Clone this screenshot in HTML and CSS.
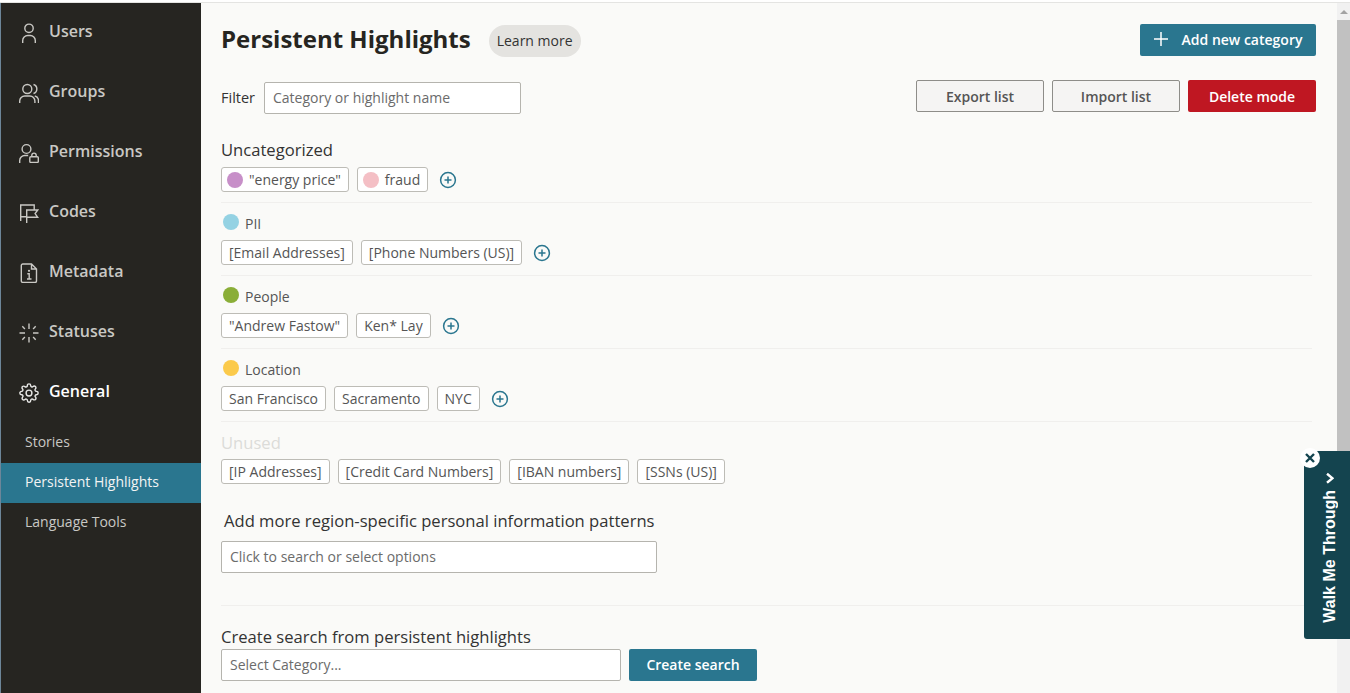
FILE: index.html
```html
<!DOCTYPE html>
<html lang="en">
<head>
<meta charset="utf-8">
<title>Persistent Highlights</title>
<link rel="stylesheet" href="styles.css">
</head>
<body>
<div class="app">
  <nav class="sidebar">
    <a class="nav-item"><svg class="nav-icon" viewBox="0 0 20 20"><circle cx="10" cy="5.300" r="4.200"/><path d="M3.700 20v-2.500a5 5 0 0 1 5-5h2.600a5 5 0 0 1 5 5V20"/></svg><span>Users</span></a>
    <a class="nav-item"><svg class="nav-icon" viewBox="0 0 20 20"><circle cx="8.300" cy="6" r="4.500"/><path d="M14.500 1.500a4.700 4.700 0 0 1 0 9M.7 20v-2a5 5 0 0 1 5-5h5.200a5 5 0 0 1 5 5v2M15.800 13a5 5 0 0 1 3.700 5v2"/></svg><span>Groups</span></a>
    <a class="nav-item"><svg class="nav-icon" viewBox="0 0 20 20"><circle cx="7.500" cy="6" r="4.400"/><path d="M.7 20v-2.500a5 5 0 0 1 5-5h3.500"/><rect x="10.800" y="13.800" width="8.500" height="5.600" rx="1"/><path d="M12.800 13.800v-1.500a2.200 2.200 0 0 1 4.400 0v1.500"/></svg><span>Permissions</span></a>
    <a class="nav-item"><svg class="nav-icon" viewBox="0 0 20 20"><path d="M1.700 18V2h13.500v5M1.700 13.700h6M7.700 20V7h11l-2.600 3.600 2.600 3.700h-11"/></svg><span>Codes</span></a>
    <a class="nav-item"><svg class="nav-icon" viewBox="0 0 20 20"><path d="M3.800 1h8.700l5 5v12a1.500 1.500 0 0 1-1.500 1.500H3.800A1.500 1.500 0 0 1 2.300 18V2.500A1.500 1.500 0 0 1 3.800 1zM12.500 1v5h5M8.300 10.700h1.900v5.300M8 16h4.500"/><circle class="icon-dot" cx="10" cy="7.800" r="1.100"/></svg><span>Metadata</span></a>
    <a class="nav-item"><svg class="nav-icon" viewBox="0 0 20 20"><path d="M10 .5v5.500M10 14v5.500M.5 10H6M14 10h5.500M3.300 3.300l2.600 2.600M14.100 14.100l2.600 2.600M3.300 16.700l2.600-2.600M14.100 5.900l2.600-2.600"/></svg><span>Statuses</span></a>
    <a class="nav-item active"><svg class="nav-icon nav-icon-gear" viewBox="0 0 24 24"><circle cx="12" cy="12" r="3.500"/><path d="M19.400 15a1.650 1.650 0 0 0 .33 1.820l.06.06a2 2 0 0 1 0 2.830 2 2 0 0 1-2.830 0l-.06-.06a1.650 1.650 0 0 0-1.820-.33 1.650 1.650 0 0 0-1 1.510V21a2 2 0 0 1-2 2 2 2 0 0 1-2-2v-.09A1.650 1.650 0 0 0 9 19.400a1.650 1.650 0 0 0-1.820.33l-.06.06a2 2 0 0 1-2.830 0 2 2 0 0 1 0-2.830l.06-.06a1.650 1.650 0 0 0 .33-1.820 1.650 1.650 0 0 0-1.510-1H3a2 2 0 0 1-2-2 2 2 0 0 1 2-2h.09A1.650 1.650 0 0 0 4.600 9a1.650 1.650 0 0 0-.33-1.820l-.06-.06a2 2 0 0 1 0-2.830 2 2 0 0 1 2.830 0l.06.06a1.650 1.650 0 0 0 1.820.33H9a1.650 1.650 0 0 0 1-1.510V3a2 2 0 0 1 2-2 2 2 0 0 1 2 2v.09a1.650 1.650 0 0 0 1 1.510 1.650 1.650 0 0 0 1.820-.33l.06-.06a2 2 0 0 1 2.830 0 2 2 0 0 1 0 2.830l-.06.06a1.650 1.650 0 0 0-.33 1.820V9a1.650 1.650 0 0 0 1.510 1H21a2 2 0 0 1 2 2 2 2 0 0 1-2 2h-.09a1.650 1.650 0 0 0-1.510 1z"/></svg><span>General</span></a>
    <a class="sub-item">Stories</a>
    <a class="sub-item current">Persistent Highlights</a>
    <a class="sub-item">Language Tools</a>
  </nav>

  <main class="content">
    <header class="title-row">
      <h1>Persistent Highlights</h1>
      <a class="learn">Learn more</a>
      <button class="btn btn-primary btn-add"><svg class="plus" viewBox="0 0 14 14"><path d="M7 0v14M0 7h14"/></svg>Add new category</button>
    </header>

    <div class="filter-row">
      <label class="filter-label">Filter</label>
      <div class="field field-filter">Category or highlight name</div>
      <div class="actions">
        <button class="btn btn-outline">Export list</button>
        <button class="btn btn-outline">Import list</button>
        <button class="btn btn-danger">Delete mode</button>
      </div>
    </div>

    <section class="group group-first">
      <h2 class="heading">Uncategorized</h2>
      <div class="tags">
        <span class="tag"><i class="dot dot-purple"></i>"energy price"</span>
        <span class="tag"><i class="dot dot-pink"></i>fraud</span>
        <svg class="add" viewBox="0 0 18 18"><circle cx="9" cy="9" r="7.400"/><path d="M9 5.500v7M5.500 9h7"/></svg>
      </div>
    </section>

    <section class="group">
      <div class="cat"><i class="dot dot-blue"></i>PII</div>
      <div class="tags">
        <span class="tag">[Email Addresses]</span>
        <span class="tag">[Phone Numbers (US)]</span>
        <svg class="add" viewBox="0 0 18 18"><circle cx="9" cy="9" r="7.400"/><path d="M9 5.500v7M5.500 9h7"/></svg>
      </div>
    </section>

    <section class="group">
      <div class="cat"><i class="dot dot-green"></i>People</div>
      <div class="tags">
        <span class="tag">"Andrew Fastow"</span>
        <span class="tag">Ken* Lay</span>
        <svg class="add" viewBox="0 0 18 18"><circle cx="9" cy="9" r="7.400"/><path d="M9 5.500v7M5.500 9h7"/></svg>
      </div>
    </section>

    <section class="group">
      <div class="cat"><i class="dot dot-yellow"></i>Location</div>
      <div class="tags">
        <span class="tag">San Francisco</span>
        <span class="tag">Sacramento</span>
        <span class="tag">NYC</span>
        <svg class="add" viewBox="0 0 18 18"><circle cx="9" cy="9" r="7.400"/><path d="M9 5.500v7M5.500 9h7"/></svg>
      </div>
    </section>

    <section class="group group-unused">
      <h2 class="heading heading-muted">Unused</h2>
      <div class="tags">
        <span class="tag">[IP Addresses]</span>
        <span class="tag">[Credit Card Numbers]</span>
        <span class="tag">[IBAN numbers]</span>
        <span class="tag">[SSNs (US)]</span>
      </div>
    </section>

    <section class="region">
      <h2 class="heading heading-region">Add more region-specific personal information patterns</h2>
      <div class="field field-region">Click to search or select options</div>
    </section>

    <section class="create">
      <h2 class="heading heading-create">Create search from persistent highlights</h2>
      <div class="create-row">
        <div class="field field-category">Select Category...</div>
        <button class="btn btn-primary btn-create">Create search</button>
      </div>
    </section>
  </main>

  <div class="scrollbar"><span class="scroll-arrow"></span><span class="scroll-thumb"></span></div>
</div>

<aside class="walkme">
  <span class="walkme-label">Walk Me Through<svg class="walkme-chev" viewBox="0 0 8 11"><path d="M7 1 1.500 5.500 7 10"/></svg></span>
  <span class="walkme-close"><svg viewBox="0 0 10 10"><path d="M1 1l8 8M9 1l-8 8"/></svg></span>
</aside>
</body>
</html>
```

FILE: styles.css
```css
* { box-sizing: border-box; }
html, body { margin: 0; height: 100%; overflow: hidden; }
body {
  font-family: "Open Sans", "Liberation Sans", sans-serif;
  color: #333;
  background: #fafaf8;
  position: relative;
}
.app {
  display: flex;
  height: 693px;
  padding-top: 3px;
  background: linear-gradient(#fff 0 2px, #e4e4e2 2px 3px, transparent 3px);
}
.sidebar {
  width: 201px;
  flex: none;
  background: #262521;
  border-left: 1px solid #6d8699;
}
.nav-item {
  height: 60px;
  display: flex;
  align-items: center;
  padding-left: 18px;
  padding-bottom: 4px;
  gap: 10px;
  color: #c9c8c4;
  font-size: 16px;
  font-weight: 600;
}
.nav-item.active { color: #fff; }
.nav-icon {
  width: 20px;
  height: 20px;
  fill: none;
  stroke: #c9c8c4;
  stroke-width: 1.400;
  flex: none;
  margin-top: 4px;
}
.nav-item.active .nav-icon { stroke: #e8e8e6; }
.nav-icon-gear { stroke-width: 1.700; }
.icon-dot { fill: #c9c8c4; stroke: none; }
.sub-item {
  display: flex;
  align-items: center;
  height: 40px;
  padding: 0 0 4px 24px;
  font-size: 14px;
  color: #c9c8c4;
}
.sub-item.current { background: #2a768f; color: #f2f4f4; }
.content {
  flex: 1;
  min-width: 0;
  padding: 21px 21px 0 20px;
  background: #fafaf8;
}
.title-row {
  display: flex;
  align-items: center;
  height: 32px;
}
h1 {
  margin: 0 0 4px;
  font-size: 24px;
  font-weight: 700;
  color: #262521;
}
.learn {
  margin: 2px 0 0 18px;
  height: 32px;
  line-height: 32px;
  padding: 0 8px;
  border-radius: 16px;
  background: #e4e3e0;
  font-size: 14px;
  color: #333;
}
.btn {
  font-family: inherit;
  font-size: 14px;
  font-weight: 600;
  height: 32px;
  border-radius: 2px;
  border: 0;
  padding: 0;
  display: inline-flex;
  align-items: center;
  justify-content: center;
}
.btn-primary { background: #2a768f; color: #fff; }
.btn-add { margin-left: auto; width: 176px; gap: 14px; padding-bottom: 2px; }
.plus { width: 14px; height: 14px; fill: none; stroke: #fff; stroke-width: 1.500; }
.filter-row {
  display: flex;
  align-items: center;
  margin-top: 24px;
  height: 32px;
}
.filter-label { width: 43px; flex: none; font-size: 14.500px; font-weight: 500; color: #333; margin-top: 2px; }
.field {
  background: #fff;
  border: 1px solid #b5b4ae;
  border-radius: 2px;
  height: 32px;
  display: flex;
  align-items: center;
  font-size: 14px;
  color: #6b6b6b;
  padding-bottom: 2px;
}
.field-filter { width: 257px; padding-left: 8px; margin-top: 4px; }
.actions { margin-left: auto; display: flex; gap: 8px; }
.btn-outline {
  width: 128px;
  background: #f5f4f3;
  border: 1px solid #8e8d89;
  color: #555;
}
.btn-danger { width: 128px; background: #bf1722; color: #fff; }
.group {
  height: 73px;
  margin-right: 4px;
  border-bottom: 1px solid #f0efed;
  padding-top: 12px;
}
.group-first { padding-top: 0; margin-top: 26px; height: 65px; }
.group-unused { border-bottom: 0; padding-top: 9px; height: 87px; }
.heading {
  margin: 0;
  font-size: 16.600px;
  font-weight: 500;
  line-height: 24px;
  color: #333;
}
.heading-muted { color: #dcdcd9; }
.heading-region { padding-left: 3px; }
.cat {
  display: flex;
  align-items: center;
  height: 16px;
  font-size: 14px;
  color: #555;
}
.cat .dot { margin: -3px 6px 0 2px; }
.dot {
  display: inline-block;
  width: 16px;
  height: 16px;
  border-radius: 50%;
  flex: none;
}
.dot-purple { background: #c78fc8; }
.dot-pink { background: #f4bfc5; }
.dot-blue { background: #94d2e3; }
.dot-green { background: #8aae38; }
.dot-yellow { background: #fbca4b; }
.tags {
  display: flex;
  align-items: center;
  gap: 8px;
  margin-top: 9px;
}
.group-first .tags { margin-top: 5px; }
.group-unused .tags { margin-top: 4px; }
.tag {
  height: 25px;
  display: inline-flex;
  align-items: center;
  gap: 6px;
  padding: 0 7px;
  border: 1px solid #bdbcb6;
  border-radius: 3px;
  background: #fff;
  font-size: 14px;
  color: #555;
}
.tag .dot { margin-left: -2px; }
.add { width: 18px; height: 18px; margin-left: 3px; fill: none; stroke: #2a768f; stroke-width: 1.500; }
.field-region { width: 436px; margin-top: 8px; padding-left: 8px; }
.create { margin: 32px 4px 0 0; padding-top: 19px; border-top: 1px solid #f0efed; }
.create-row { display: flex; gap: 8px; }
.field-category { width: 400px; padding-left: 8px; }
.btn-create { width: 128px; padding-bottom: 2px; }
.scrollbar {
  width: 13px;
  flex: none;
  background: #f1f1f1;
  display: flex;
  flex-direction: column;
  align-items: center;
}
.scroll-arrow {
  margin: 7px 0 6px;
  width: 0;
  height: 0;
  border-left: 4px solid transparent;
  border-right: 4px solid transparent;
  border-bottom: 4px solid #a3a3a3;
}
.scroll-thumb { width: 100%; flex: 1; background: #c1c1c1; max-height: 520px; }
.walkme {
  position: absolute;
  right: 0;
  top: 451px;
  width: 46px;
  height: 188px;
  padding: 6px 0 0 6px;
  background: #14444f;
  border-radius: 3px 0 0 3px;
  color: #fff;
  display: flex;
  align-items: center;
  justify-content: center;
}
.walkme-label {
  writing-mode: vertical-rl;
  transform: rotate(180deg);
  font-family: "Liberation Sans", Arial, sans-serif;
  font-size: 16px;
  font-weight: 700;
  display: inline-flex;
  align-items: center;
  gap: 6px;
}
.walkme-chev {
  width: 8px;
  height: 11px;
  fill: none;
  stroke: #fff;
  stroke-width: 2.400;
}
.walkme-close {
  position: absolute;
  left: -4px;
  top: -3px;
  width: 20px;
  height: 20px;
  border-radius: 50%;
  background: #fff;
  display: flex;
  align-items: center;
  justify-content: center;
}
.walkme-close svg { width: 10px; height: 10px; fill: none; stroke: #14444f; stroke-width: 2.400; }
```
